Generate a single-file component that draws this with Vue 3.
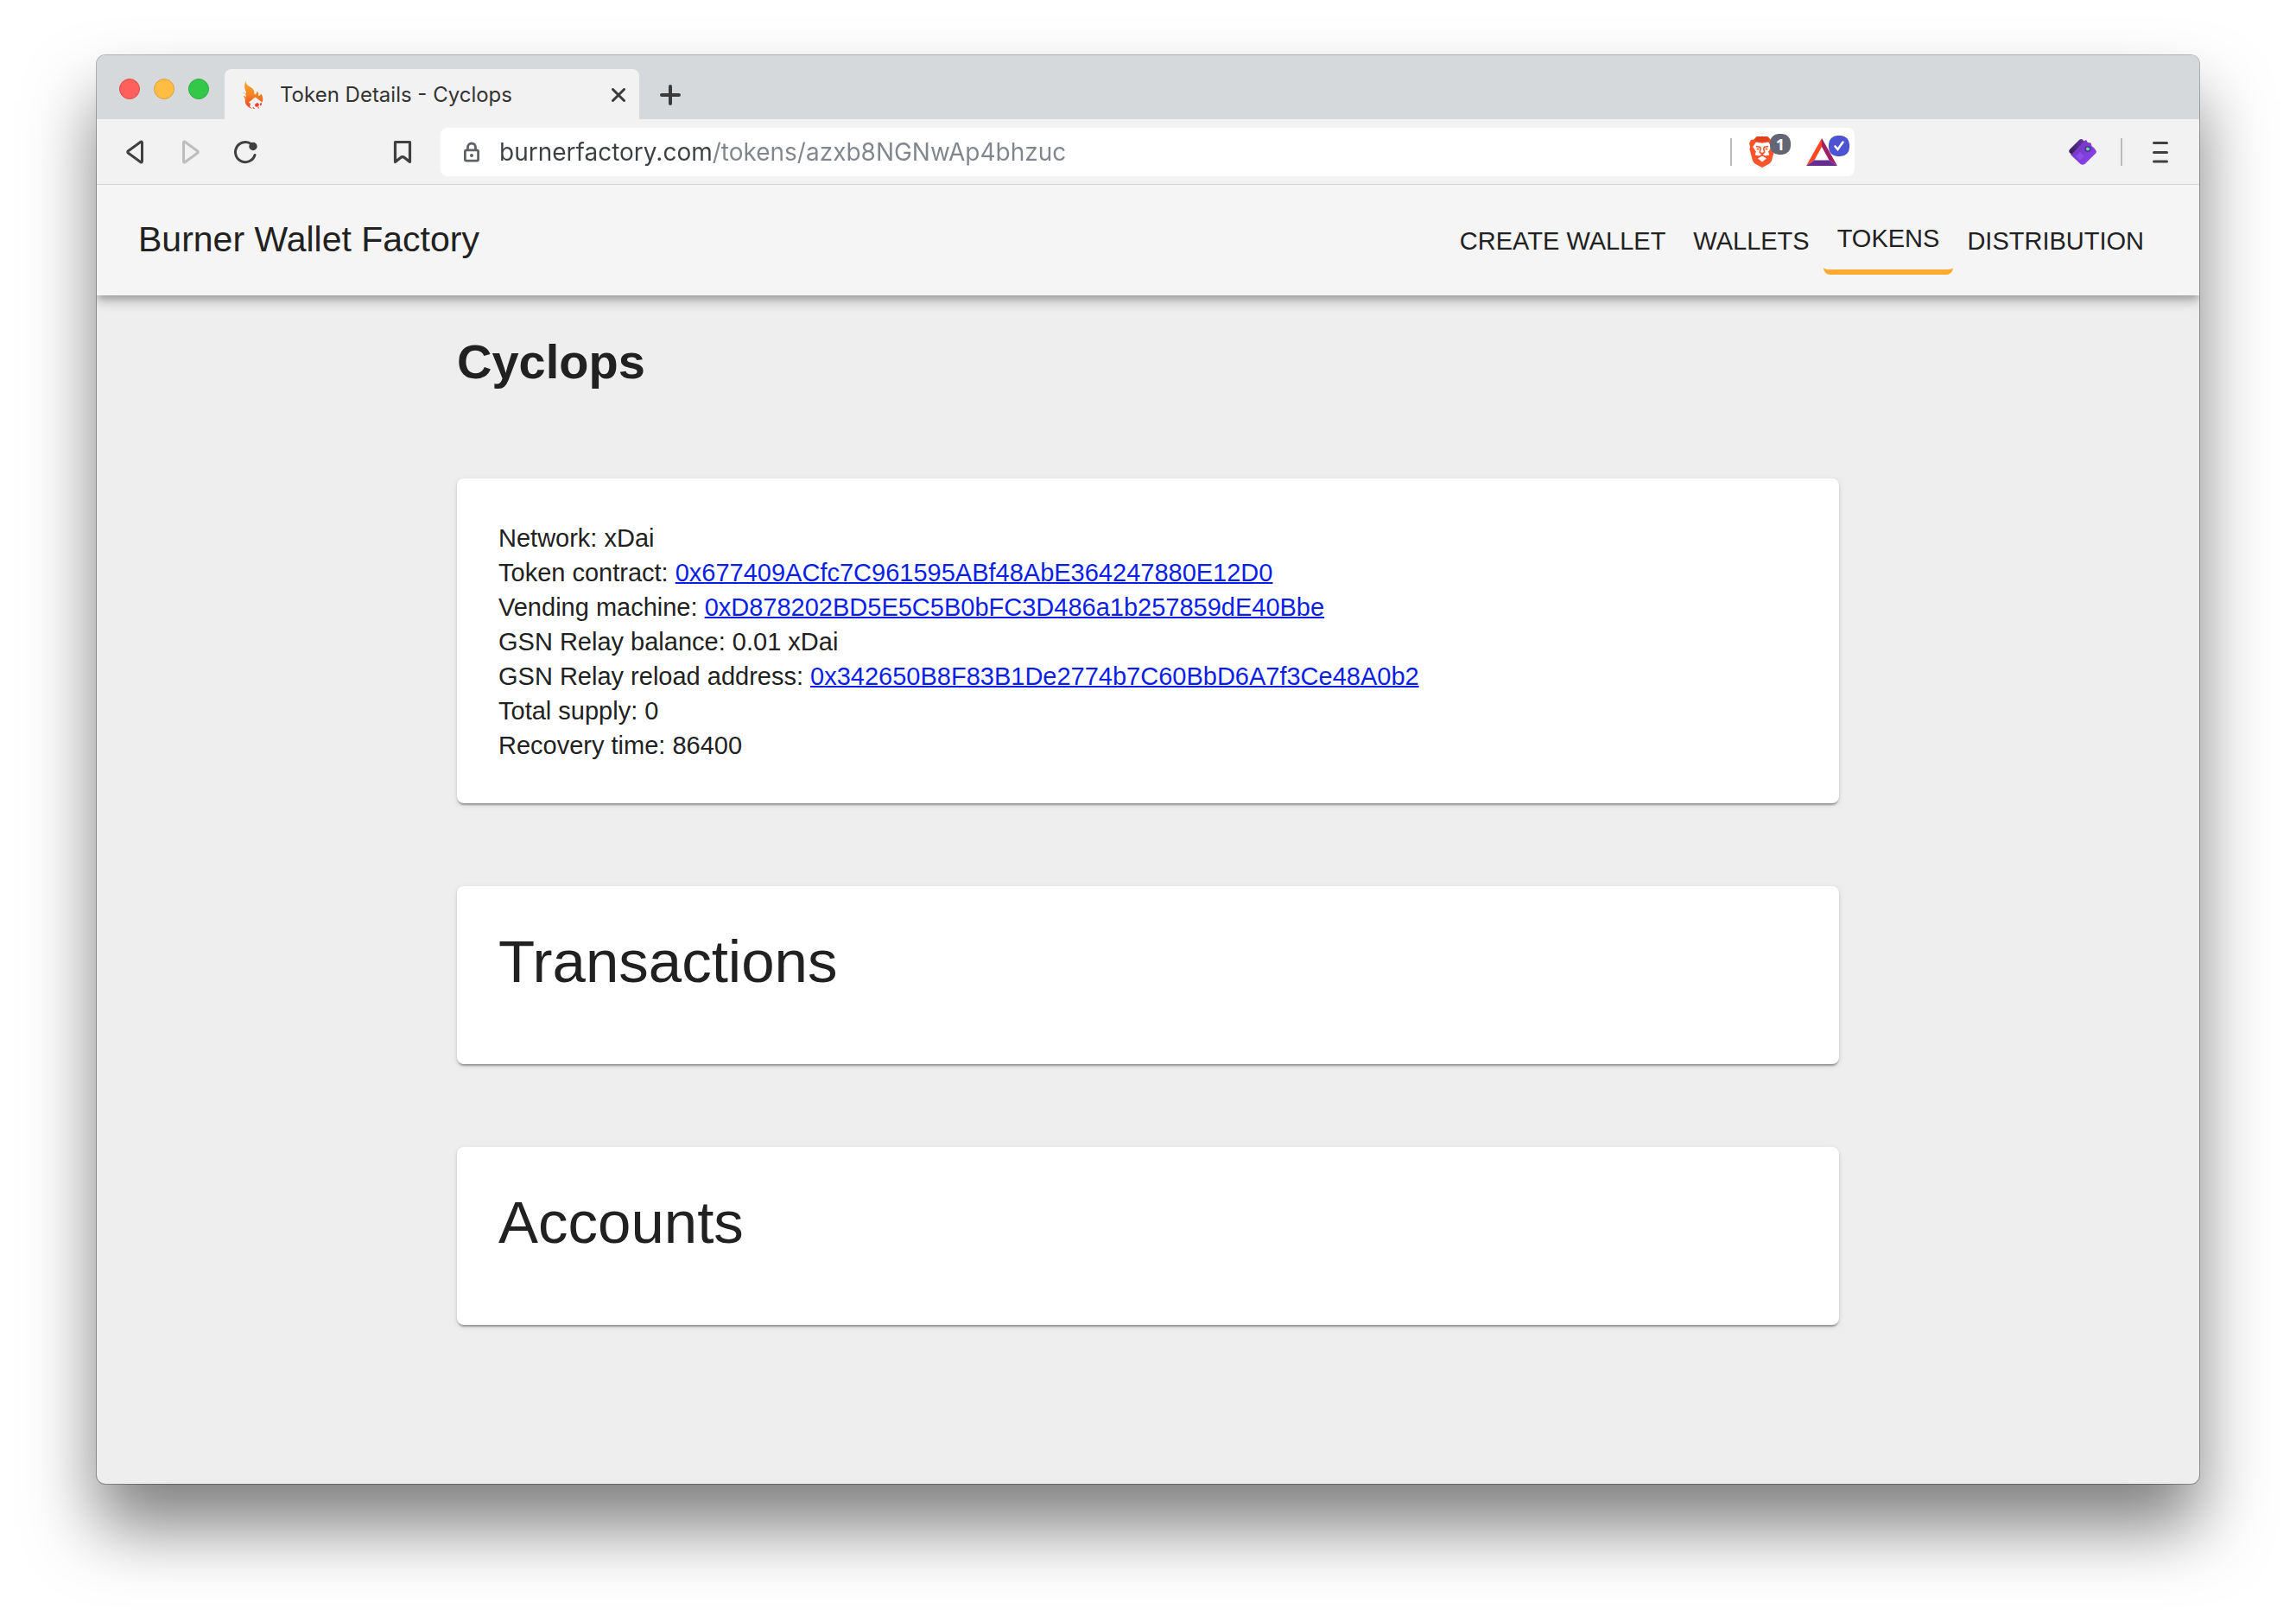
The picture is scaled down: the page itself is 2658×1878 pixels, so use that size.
<script setup>
import { ref } from 'vue'

const url = ref('burnerfactory.com/tokens/azxb8NGNwAp4bhzuc')

const links = [
  { label: 'CREATE WALLET' },
  { label: 'WALLETS' },
  { label: 'TOKENS', active: true },
  { label: 'DISTRIBUTION' },
]

const details = [
  { label: 'Network', text: 'xDai' },
  { label: 'Token contract', address: '0x677409ACfc7C961595ABf48AbE364247880E12D0' },
  { label: 'Vending machine', address: '0xD878202BD5E5C5B0bFC3D486a1b257859dE40Bbe' },
  { label: 'GSN Relay balance', text: '0.01 xDai' },
  { label: 'GSN Relay reload address', address: '0x342650B8F83B1De2774b7C60BbD6A7f3Ce48A0b2' },
  { label: 'Total supply', text: '0' },
  { label: 'Recovery time', text: '86400' },
]

const sections = ['Transactions', 'Accounts']
</script>

<template>
  <div class="desktop">
    <div class="window">
      <div class="tab-strip">
        <div class="lights">
          <button class="light red" aria-label="Close window"></button>
          <button class="light yellow" aria-label="Minimize window"></button>
          <button class="light green" aria-label="Zoom window"></button>
        </div>
        <div class="tab">
          <svg class="favicon" width="24" height="32" viewBox="0 0 24 32" aria-hidden="true">
            <defs>
              <linearGradient id="flame" x1="0" y1="0" x2="0" y2="1">
                <stop offset="0" stop-color="#f9a826" />
                <stop offset=".5" stop-color="#f58220" />
                <stop offset="1" stop-color="#e8412c" />
              </linearGradient>
            </defs>
            <path fill="url(#flame)" d="M3.500 0c.2 2.500 1.500 4.500 4 6c4 2 6.500 4.500 6 9.500c2-.3 3-1.800 3-4c2 1.500 2.200 3.500 1.500 5.500c1.500-.3 2.700-1.200 3.500-2.500c2 3.500 2.500 7 1 10l-2-1.500l-6-4.500l-7.500 6l2 1.500l-.8 3.500l3 2.300C5.500 30.500 2.300 26.500 2.800 22c.1-2-.8-3.500-2-5c1.500 0 2.300.6 2.800 1.800c.5-1.500.2-2.700-.8-4C1.800 13.800.8 14.500 0 13.500c1.500 0 3 .2 4 1.500C4.500 12 2.500 10.500 2.200 7C2 4 2.500 2 3.500 0z" />
            <path fill="#e8412c" d="M14 27l3-2.200l2.300 2.500l-2.300 2.700l-2.600-.8zM19.500 26.500l2.200-2l.3 2.500l-1.200 1.800zM17 31l1.700-1.500l.3 2zM11.500 30l3 1.200l-2.300.8z" />
          </svg>
          <span class="tab-title">Token Details - Cyclops</span>
          <button class="tab-close" aria-label="Close tab">
            <svg width="16" height="16" viewBox="0 0 16 16"><path d="M1.500 1.500l13 13M14.500 1.500l-13 13" stroke="#3b3b3b" stroke-width="3" stroke-linecap="round" /></svg>
          </button>
        </div>
        <button class="new-tab" aria-label="New tab">
          <svg width="24" height="24" viewBox="0 0 24 24"><path d="M12 2v20M2 12h20" stroke="#3b3b3b" stroke-width="4" stroke-linecap="round" /></svg>
        </button>
      </div>

      <div class="toolbar">
        <div class="history">
          <button aria-label="Back">
            <svg width="28" height="28" viewBox="0 0 28 28"><path d="M22.500 3v22a1 1 0 0 1-1.600.8L6.200 15a1.300 1.300 0 0 1 0-2L20.900 2.200a1 1 0 0 1 1.600.8z" fill="none" stroke="#404040" stroke-width="3" stroke-linejoin="round" /></svg>
          </button>
          <button aria-label="Forward">
            <svg width="28" height="28" viewBox="0 0 28 28"><path d="M6.500 3v22a1 1 0 0 0 1.600.8L22.800 15a1.300 1.300 0 0 0 0-2L8.100 2.200A1 1 0 0 0 6.500 3z" fill="none" stroke="#bdbdbd" stroke-width="3" stroke-linejoin="round" /></svg>
          </button>
          <button aria-label="Reload">
            <svg width="28" height="28" viewBox="0 0 28 28"><path d="M20 4.300A11.500 11.500 0 1 0 25 17.500" fill="none" stroke="#404040" stroke-width="3" stroke-linecap="round" /><circle cx="23" cy="7.500" r="4.700" fill="#404040" /></svg>
          </button>
        </div>
        <button aria-label="Bookmark this page">
          <svg width="28" height="28" viewBox="0 0 28 28"><path d="M5.500 2.500h17v23l-6.300-5a3.500 3.500 0 0 0-4.400 0l-6.300 5z" fill="none" stroke="#404040" stroke-width="3.200" stroke-linejoin="round" /></svg>
        </button>
        <div class="address">
          <svg width="20" height="24" viewBox="0 0 20 24" aria-hidden="true"><path d="M5.500 10V6.500a4.500 4.500 0 0 1 9 0V10" fill="none" stroke="#5f6368" stroke-width="2.800" /><rect x="2.400" y="9.900" width="15.200" height="12.200" rx="1.500" fill="none" stroke="#5f6368" stroke-width="2.800" /><circle cx="10" cy="16" r="2" fill="#5f6368" /></svg>
          <input v-model="url" class="url" type="text" aria-label="Address" spellcheck="false" />
          <span class="divider"></span>
          <button class="shield" aria-label="Shields">
            <svg width="30" height="36" viewBox="0 0 30 36">
              <path fill="#fb542b" d="M9 0h12l3.500 3.500L28 4l2 4l-1 4l.5 3l-3.500 13q-.8 2.300-3 3.800L15 36l-8-4.200Q4.800 30.300 4 28L.5 15L1 12L0 8l2-4l3.500-.5z" />
              <path fill="#e2421b" d="M9 0h12l3.500 3.500L22 6H8L5.500 3.500z" />
              <path fill="#fff" d="M8 6.500l7 1.200l7-1.200l3.800 5.500l-3.600 5.500l1 4l-4.700 1l-3.500-2.500l-3.500 2.500l-4.700-1l1-4L4.200 12z" />
              <path fill="#fff" d="M15 22.500l5 3l-5 4l-5-4z" />
              <path fill="none" stroke="#fb542b" stroke-width="1.600" d="M8 11.500l4.500.8l.8 1.500l-1 4.500l2.700 1.700l2.700-1.700l-1-4.500l.8-1.500l4.500-.8M15 20v2.500M8.500 14.500h3M18.500 14.500h3" />
            </svg>
            <span class="badge grey">1</span>
          </button>
          <button class="rewards" aria-label="Rewards">
            <svg width="36" height="32" viewBox="0 0 36 32">
              <path fill="#ff4724" d="M18 0v10L9.500 25.500L0 32z" />
              <path fill="#9e1f63" d="M18 0v10l8.500 15.500L36 32z" />
              <path fill="#662d91" d="M0 32l9.500-6.500h17L36 32z" />
            </svg>
            <span class="badge blue">
              <svg width="14" height="14" viewBox="0 0 14 14"><path d="M2.500 7.500l3 3.500l6-8.500" fill="none" stroke="#fff" stroke-width="2.600" stroke-linecap="round" /></svg>
            </span>
          </button>
        </div>
        <div class="extensions">
          <button aria-label="Wallet extension">
            <svg width="32" height="32" viewBox="0 0 32 32">
              <defs>
                <linearGradient id="gem" x1="0" y1="0" x2="1" y2="1"><stop offset="0" stop-color="#6b35b5" /><stop offset="1" stop-color="#8f45f0" /></linearGradient>
                <linearGradient id="edge" x1="1" y1="0" x2="0" y2="1"><stop offset="0" stop-color="#6a35a8" /><stop offset="1" stop-color="#2f1a50" /></linearGradient>
              </defs>
              <path fill="url(#gem)" d="M14 2l3 1.500L20 2l2 3l3.500.5l1 3.500l3 2.500l2 3q1 1.500-.3 3L19 29.500q-3 2.500-6 0L2 19z" />
              <path fill="url(#edge)" d="M12 2q2-1.800 4-.5l1.500 2L3.500 18.500L1 17q-1.500-2 0-4z" />
              <path fill="#9450f5" opacity=".75" d="M13 16l5 5l-5 4.500l-5-4.500z" />
              <circle cx="22" cy="12.500" r="3.600" fill="#5a2aa0" />
              <circle cx="22" cy="12.500" r="2" fill="#5fdc9c" />
            </svg>
          </button>
          <span class="divider"></span>
          <button aria-label="Menu">
            <svg width="18" height="26" viewBox="0 0 18 26"><path d="M1.500 2.500h15M1.500 13.500h15M1.500 24h15" stroke="#404040" stroke-width="3" stroke-linecap="round" /></svg>
          </button>
        </div>
      </div>

      <header class="app-bar">
        <a class="brand" href="#">Burner Wallet Factory</a>
        <nav class="nav">
          <a v-for="link in links" :key="link.label" href="#" :class="['nav-link', { active: link.active }]">{{ link.label }}</a>
        </nav>
      </header>

      <main class="page">
        <h1>Cyclops</h1>
        <div class="cards">
          <section class="card">
            <div v-for="row in details" :key="row.label">
              {{ row.label }}: <a v-if="row.address" href="#">{{ row.address }}</a><template v-else>{{ row.text }}</template>
            </div>
          </section>
          <section v-for="title in sections" :key="title" class="card">
            <h2>{{ title }}</h2>
          </section>
        </div>
      </main>
    </div>
  </div>
</template>

<style>
body {
  margin: 0;
  background: #fff;
}
</style>

<style scoped>
* {
  box-sizing: border-box;
}

button {
  display: flex;
  align-items: center;
  justify-content: center;
  padding: 0;
  border: 0;
  background: none;
}

svg {
  display: block;
  flex: none;
}

.desktop {
  display: flex;
  min-height: 100vh;
  padding: 64px 112px 160px;
  font-family: "Liberation Sans", Arial, sans-serif;
  color: #212121;
}

.window {
  display: flex;
  flex: 1;
  flex-direction: column;
  overflow: hidden;
  border-radius: 10px;
  background: #eee;
  box-shadow: 0 0 0 1px rgba(0, 0, 0, 0.28), 0 50px 80px rgba(0, 0, 0, 0.5);
}

.tab-strip {
  display: flex;
  align-items: flex-end;
  height: 74px;
  background: #d5d9dc;
}

.lights {
  display: flex;
  gap: 16px;
  align-self: center;
  padding: 4px 18px 0 26px;
}

.light {
  width: 24px;
  height: 24px;
  border: 1px solid;
  border-radius: 50%;
}

.red {
  border-color: #e24b47;
  background: #ff605c;
}

.yellow {
  border-color: #e0a03a;
  background: #ffbd44;
}

.green {
  border-color: #2aae3a;
  background: #34c84a;
}

.tab {
  display: flex;
  align-items: center;
  width: 480px;
  height: 58px;
  padding: 2px 16px 0 21px;
  border-radius: 8px 8px 0 0;
  background: #f2f2f2;
}

.tab-title {
  flex: 1;
  margin-left: 19px;
  font: 24px/32px Inter, sans-serif;
  color: #333;
}

.new-tab {
  width: 72px;
  height: 56px;
}

.toolbar {
  position: relative;
  z-index: 2;
  display: flex;
  align-items: center;
  height: 76px;
  padding: 0 36px 0 30px;
  border-bottom: 1px solid #d5d5d5;
  background: #f2f2f2;
}

.history {
  display: flex;
  gap: 36px;
  margin-right: 154px;
}

.address {
  display: flex;
  align-items: center;
  flex: 1;
  height: 56px;
  margin: 0 248px 0 30px;
  padding: 0 6px 0 26px;
  border-radius: 8px;
  background: #fff;
}

.url {
  flex: 1;
  min-width: 0;
  height: 40px;
  margin-left: 22px;
  padding: 0;
  border: 0;
  outline: 0;
  background: linear-gradient(to right, #3c4043 246px, #80868b 246px);
  background-clip: text;
  font: 28px/40px Inter, sans-serif;
  color: transparent;
}

.divider {
  width: 2px;
  height: 32px;
  background: #b8babc;
}

.shield,
.rewards {
  position: relative;
}

.shield {
  width: 48px;
  margin-left: 20px;
  justify-content: flex-start;
}

.rewards {
  width: 50px;
  margin-left: 18px;
  justify-content: flex-start;
}

.badge {
  position: absolute;
  top: -3px;
  right: 0;
  display: flex;
  align-items: center;
  justify-content: center;
  width: 24px;
  height: 24px;
  border-radius: 10px;
  font: 700 18px/24px "Open Sans", sans-serif;
  color: #fff;
}

.grey {
  background: #626573;
}

.blue {
  background: #4c54d2;
}

.extensions {
  display: flex;
  align-items: center;
}

.extensions .divider {
  margin: 0 35px 0 28px;
}

.app-bar {
  position: relative;
  z-index: 1;
  display: flex;
  align-items: center;
  justify-content: space-between;
  height: 128px;
  padding: 0 48px;
  background: #f5f5f5;
  box-shadow: 0 4px 8px -2px rgba(0, 0, 0, 0.2), 0 8px 10px rgba(0, 0, 0, 0.14), 0 2px 20px rgba(0, 0, 0, 0.12);
}

.brand {
  padding-bottom: 2px;
  font-size: 41px;
  line-height: 64px;
  color: inherit;
  text-decoration: none;
}

.nav {
  display: flex;
  align-items: center;
}

.nav-link {
  padding: 13px 16px 11px;
  border-radius: 8px;
  font-size: 29px;
  line-height: 50px;
  color: inherit;
  text-decoration: none;
}

.active {
  border-bottom: 6px solid #ffa92e;
}

.page {
  width: 100%;
  max-width: 1600px;
  margin: 0 auto;
  padding: 49px 0 96px;
}

h1 {
  margin: 0 0 107px;
  font-size: 56px;
  line-height: 56px;
}

.cards {
  display: flex;
  flex-direction: column;
  gap: 96px;
}

.card {
  padding: 49px 48px 47px;
  border-radius: 8px;
  background: #fff;
  font-size: 29px;
  line-height: 40px;
  box-shadow: 0 4px 2px -2px rgba(0, 0, 0, 0.2), 0 2px 2px rgba(0, 0, 0, 0.14), 0 2px 6px rgba(0, 0, 0, 0.12);
}

.card a {
  color: #0a1ee8;
  text-decoration-thickness: 2px;
}

h2 {
  margin: 0 0 32px;
  font-size: 69px;
  font-weight: 400;
  line-height: 78px;
}
</style>
